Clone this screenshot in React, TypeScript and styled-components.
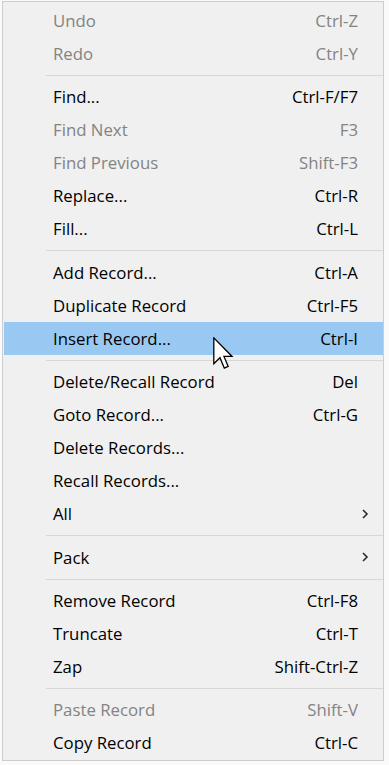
import styled, { createGlobalStyle } from "styled-components";

type Item =
  | { kind: "sep" }
  | {
      kind: "item";
      label: string;
      shortcut?: string;
      disabled?: boolean;
      submenu?: boolean;
      active?: boolean;
    };

const items: Item[] = [
  { kind: "item", label: "Undo", shortcut: "Ctrl-Z", disabled: true },
  { kind: "item", label: "Redo", shortcut: "Ctrl-Y", disabled: true },
  { kind: "sep" },
  { kind: "item", label: "Find...", shortcut: "Ctrl-F/F7" },
  { kind: "item", label: "Find Next", shortcut: "F3", disabled: true },
  { kind: "item", label: "Find Previous", shortcut: "Shift-F3", disabled: true },
  { kind: "item", label: "Replace...", shortcut: "Ctrl-R" },
  { kind: "item", label: "Fill...", shortcut: "Ctrl-L" },
  { kind: "sep" },
  { kind: "item", label: "Add Record...", shortcut: "Ctrl-A" },
  { kind: "item", label: "Duplicate Record", shortcut: "Ctrl-F5" },
  { kind: "item", label: "Insert Record...", shortcut: "Ctrl-I", active: true },
  { kind: "sep" },
  { kind: "item", label: "Delete/Recall Record", shortcut: "Del" },
  { kind: "item", label: "Goto Record...", shortcut: "Ctrl-G" },
  { kind: "item", label: "Delete Records..." },
  { kind: "item", label: "Recall Records..." },
  { kind: "item", label: "All", submenu: true },
  { kind: "sep" },
  { kind: "item", label: "Pack", submenu: true },
  { kind: "sep" },
  { kind: "item", label: "Remove Record", shortcut: "Ctrl-F8" },
  { kind: "item", label: "Truncate", shortcut: "Ctrl-T" },
  { kind: "item", label: "Zap", shortcut: "Shift-Ctrl-Z" },
  { kind: "sep" },
  { kind: "item", label: "Paste Record", shortcut: "Shift-V", disabled: true },
  { kind: "item", label: "Copy Record", shortcut: "Ctrl-C" },
];

function App() {
  return (
    <>
      <GlobalStyle />
      <StyledMenu>
        {items.map((item, i) =>
          item.kind === "sep" ? (
            <StyledSeparator key={i} />
          ) : (
            <StyledRow key={i} $disabled={item.disabled} $active={item.active}>
              <StyledLabel>{item.label}</StyledLabel>
              <StyledShortcut>{item.shortcut}</StyledShortcut>
              <StyledArrow>
                {item.submenu && (
                  <svg width="8" height="12" viewBox="0 0 8 12">
                    <path d="M2 2 L6 6 L2 10" fill="none" stroke="#2b2b2b" strokeWidth="1.6" />
                  </svg>
                )}
              </StyledArrow>
              {item.active && (
                <StyledCursor width="21" height="34" viewBox="0 0 13 21">
                  <path
                    d="M0.5 0.5 L0.5 16.5 L4.3 12.8 L7 19.2 L9.4 18.2 L6.8 12 L11.8 12 Z"
                    fill="#fff"
                    stroke="#000"
                    strokeWidth="0.8"
                    strokeLinejoin="miter"
                  />
                </StyledCursor>
              )}
            </StyledRow>
          )
        )}
      </StyledMenu>
    </>
  );
}

export default App;

const GlobalStyle = createGlobalStyle`
  html, body {
    margin: 0;
    padding: 0;
    background: #fafafa;
  }
  body {
    font-family: "Open Sans", "Noto Sans", sans-serif;
  }
`;

const StyledMenu = styled.div`
  margin: 1px 3px 0 2px;
  width: 382px;
  height: 760px;
  box-sizing: border-box;
  border: 1px solid #cdcdcd;
  background-color: #f0f0f0;
  padding: 2px 0 0 0;
  display: flex;
  flex-direction: column;
`;

const StyledRow = styled.div<{ $disabled?: boolean; $active?: boolean }>`
  position: relative;
  display: grid;
  grid-template-columns: 1fr auto 25px;
  align-items: center;
  height: 33px;
  margin: 0 0 0 1px;
  padding-left: 49px;
  font-size: 16.8px;
  color: ${({ $disabled }) => ($disabled ? "#838383" : "#000")};
  background-color: ${({ $active }) => ($active ? "#99c9f3" : "transparent")};
`;

const StyledLabel = styled.span`
  white-space: nowrap;
`;

const StyledShortcut = styled.span`
  white-space: nowrap;
  text-align: right;
`;

const StyledArrow = styled.span`
  display: flex;
  align-items: center;
  justify-content: flex-start;
  padding-left: 3px;
`;

const StyledSeparator = styled.div`
  height: 1px;
  margin: 5px 0 4.4px 43px;
  background-color: #d7d7d7;
`;

const StyledCursor = styled.svg`
  position: absolute;
  left: 209px;
  top: 15px;
  pointer-events: none;
`;
